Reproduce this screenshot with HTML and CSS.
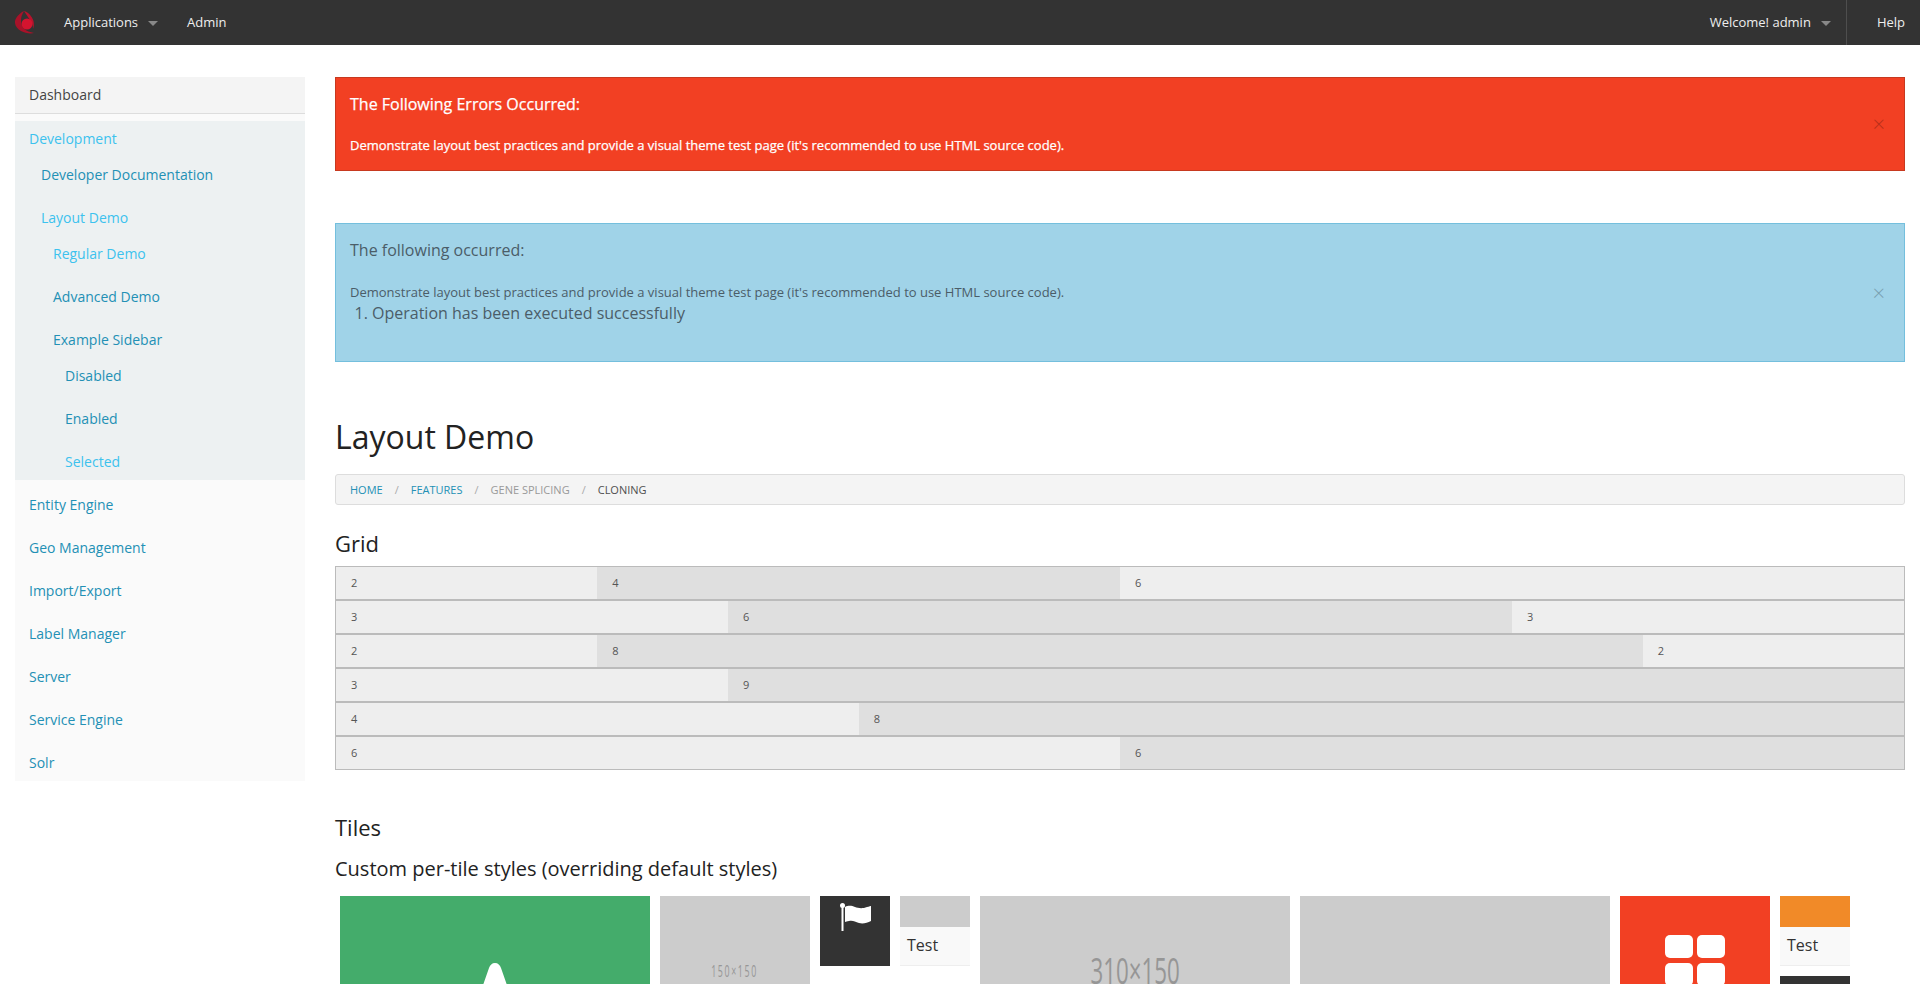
FILE: index.html
```html
<!DOCTYPE html>
<html lang="en">
<head>
    <meta charset="UTF-8">
    <meta name="viewport" content="width=device-width, initial-scale=1.0">
    <title>Layout Demo</title>
    <link rel="stylesheet" href="styles.css">
</head>
<body>
    <nav class="topbar">
        <a class="logo" href="#">
            <svg width="20" height="23" viewBox="0 0 20 23">
                <path fill="#a81229" d="M9 0C5 2 1 6 0 10c-.500 4 2 8 6 10 4 2 9 3 13 2-5-1-10-3-12-7C5 10 6 5 9 0z"/>
                <path fill="#b8132c" d="M9 0c4 1 8 5 9.500 10 .5 3 .5 6-.5 8 0-4-1-7-3-9-2-3-4-6-6-9z"/>
                <circle cx="12" cy="13" r="5.500" fill="#d4142f"/>
            </svg>
        </a>
        <a class="nav-link" href="#">Applications<span class="caret"></span></a>
        <a class="nav-link admin" href="#">Admin</a>
        <div class="nav-right">
            <a class="nav-link" href="#">Welcome! admin<span class="caret"></span></a>
            <a class="nav-link help" href="#">Help</a>
        </div>
    </nav>

    <div class="page">
        <aside class="sidebar">
            <a class="dash" href="#">Dashboard</a>
            <ul class="side-menu">
                <li class="open">
                    <a class="on" href="#">Development</a>
                    <ul class="sub">
                        <li><a href="#">Developer Documentation</a></li>
                        <li>
                            <a class="on" href="#">Layout Demo</a>
                            <ul class="sub">
                                <li><a class="on" href="#">Regular Demo</a></li>
                                <li><a href="#">Advanced Demo</a></li>
                                <li>
                                    <a href="#">Example Sidebar</a>
                                    <ul class="sub">
                                        <li><a href="#">Disabled</a></li>
                                        <li><a href="#">Enabled</a></li>
                                        <li><a class="on" href="#">Selected</a></li>
                                    </ul>
                                </li>
                            </ul>
                        </li>
                    </ul>
                </li>
                <li><a href="#">Entity Engine</a></li>
                <li><a href="#">Geo Management</a></li>
                <li><a href="#">Import/Export</a></li>
                <li><a href="#">Label Manager</a></li>
                <li><a href="#">Server</a></li>
                <li><a href="#">Service Engine</a></li>
                <li><a href="#">Solr</a></li>
            </ul>
        </aside>

        <main class="content">
            <div class="alert alert-error">
                <h4>The Following Errors Occurred:</h4>
                <p>Demonstrate layout best practices and provide a visual theme test page (it's recommended to use HTML source code).</p>
                <span class="close">&times;</span>
            </div>

            <div class="alert alert-info">
                <h4>The following occurred:</h4>
                <p>Demonstrate layout best practices and provide a visual theme test page (it's recommended to use HTML source code).</p>
                <ol>
                    <li>Operation has been executed successfully</li>
                </ol>
                <span class="close">&times;</span>
            </div>

            <h1>Layout Demo</h1>

            <ul class="breadcrumbs">
                <li><a href="#">Home</a></li>
                <li><a href="#">Features</a></li>
                <li class="unavailable">Gene Splicing</li>
                <li class="current">Cloning</li>
            </ul>

            <h2>Grid</h2>
            <div class="grid">
                <div class="grid-row">
                    <div class="col col-2">2</div>
                    <div class="col col-4">4</div>
                    <div class="col col-6">6</div>
                </div>
                <div class="grid-row">
                    <div class="col col-3">3</div>
                    <div class="col col-6">6</div>
                    <div class="col col-3">3</div>
                </div>
                <div class="grid-row">
                    <div class="col col-2">2</div>
                    <div class="col col-8">8</div>
                    <div class="col col-2">2</div>
                </div>
                <div class="grid-row">
                    <div class="col col-3">3</div>
                    <div class="col col-9">9</div>
                </div>
                <div class="grid-row">
                    <div class="col col-4">4</div>
                    <div class="col col-8">8</div>
                </div>
                <div class="grid-row">
                    <div class="col col-6">6</div>
                    <div class="col col-6">6</div>
                </div>
            </div>

            <h2 class="tiles-title">Tiles</h2>
            <h3>Custom per-tile styles (overriding default styles)</h3>

            <div class="tiles">
                <div class="tile tile-big tile-green">
                    <svg class="arrow" width="80" height="60" viewBox="0 0 80 60">
                        <path fill="#fff" d="M40 0c3 0 5 2 6 5l14 40H20L34 5c1-3 3-5 6-5z"/>
                    </svg>
                </div>
                <div class="tile tile-med placeholder"><span class="ph-small">150×150</span></div>
                <div class="tile-stack">
                    <div class="tile tile-small tile-dark">
                        <svg class="flag" width="32" height="28" viewBox="0 0 32 28">
                            <circle cx="2.500" cy="2.500" r="2.500" fill="#fff"/>
                            <rect x="1.500" y="3" width="2" height="25" fill="#fff"/>
                            <path fill="#fff" d="M5 4c4-2 7-1 10 0s7 2 12 0c2-.500 4-1 4-1v15c-4 2-8 3-12 2s-6-3-10-2c-2 0-3 1-4 1z"/>
                        </svg>
                    </div>
                </div>
                <div class="tile-stack">
                    <div class="tile tile-small tile-caption">
                        <div class="cap-img"></div>
                        <div class="cap-text">Test</div>
                    </div>
                </div>
                <div class="tile tile-big placeholder"><span class="ph-large">310×150</span></div>
                <div class="tile tile-big placeholder"></div>
                <div class="tile tile-med tile-red">
                    <svg class="apps" width="60" height="50" viewBox="0 0 60 50">
                        <rect width="28" height="23" rx="5" fill="#fff"/>
                        <rect x="32" width="28" height="23" rx="5" fill="#fff"/>
                        <rect y="28" width="28" height="23" rx="5" fill="#fff"/>
                        <rect x="32" y="28" width="28" height="23" rx="5" fill="#fff"/>
                    </svg>
                </div>
                <div class="tile-stack">
                    <div class="tile tile-small tile-caption">
                        <div class="cap-img cap-orange"></div>
                        <div class="cap-text">Test</div>
                    </div>
                    <div class="tile tile-small tile-dark"></div>
                </div>
            </div>
        </main>
    </div>
</body>
</html>
```

FILE: styles.css
```css
html {
    overflow: hidden;
}

body {
    font-family: "Open Sans", sans-serif;
    font-size: 14px;
    background-color: #fff;
    color: #222;
    margin: 0;
}

a {
    text-decoration: none;
}

ul, ol {
    list-style: none;
    margin: 0;
    padding: 0;
}

/* top bar */
.topbar {
    display: flex;
    align-items: center;
    height: 45px;
    background: #333;
    padding-left: 15px;
}

.logo {
    display: flex;
    width: 49px;
}

.nav-link {
    color: #eee;
    font-size: 13px;
    font-weight: 400;
    line-height: 45px;
    white-space: nowrap;
}

.caret {
    display: inline-block;
    margin-left: 10px;
    vertical-align: middle;
    border-style: solid;
    border-width: 5px 5px 0;
    border-color: #888 transparent transparent;
}

.admin {
    margin-left: 29px;
}

.nav-right {
    display: flex;
    margin-left: auto;
    padding-right: 15px;
}

.help {
    margin-left: 15px;
    padding-left: 30px;
    border-left: 1px solid #4e4e4e;
}

/* layout */
.page {
    display: flex;
    align-items: flex-start;
    padding: 32px 15px 0;
}

.sidebar {
    flex: 0 0 290px;
    background: #fafafa;
}

.content {
    flex: 1;
    min-width: 0;
    margin-left: 30px;
}

/* side menu */
.dash {
    display: block;
    height: 36px;
    line-height: 36px;
    padding-left: 14px;
    background: #f4f4f4;
    border-bottom: 1px solid #ddd;
    color: #444;
}

.side-menu {
    padding-top: 7px;
}

.side-menu a {
    display: block;
    height: 36px;
    line-height: 36px;
    padding-left: 14px;
    color: #2390b5;
    white-space: nowrap;
}

.side-menu > li + li {
    margin-top: 7px;
}

.side-menu a.on {
    color: #3cc2ee;
}

.open {
    background: #edf1f2;
}

.sub {
    padding-left: 12px;
}

.sub li + li {
    margin-top: 7px;
}

/* alerts */
.alert {
    position: relative;
    border: 1px solid;
    padding: 14px 14px 0;
}

.alert h4 {
    margin: 0;
    font-size: 16px;
    font-weight: 400;
    line-height: 24px;
}

.alert p {
    margin: 0;
    font-size: 13px;
    line-height: 20px;
}

.alert-error {
    height: 94px;
    box-sizing: border-box;
    background: #f24023;
    border-color: #c7391f;
    color: #fff;
}

.alert-error h4, .alert-error p {
    -webkit-text-stroke: 0.25px #fff;
}

.alert-error p {
    margin-top: 19px;
}

.alert-info {
    height: 139px;
    box-sizing: border-box;
    margin-top: 52px;
    background: #a0d3e8;
    border-color: #74bfdd;
    color: #4b5d68;
}

.alert-info p {
    margin-top: 20px;
}

.alert-info ol {
    list-style: decimal;
    margin-top: -1px;
    padding-left: 22px;
    font-size: 16px;
    line-height: 24px;
}

.close {
    position: absolute;
    right: 19px;
    top: 50%;
    margin-top: -16px;
    font-size: 22px;
    font-weight: 300;
    line-height: 30px;
    color: #000;
    opacity: 0.25;
}

/* headings */
h1 {
    margin: 53px 0 0;
    font-size: 32px;
    font-weight: 400;
    line-height: 44px;
    color: #222;
}

h2 {
    margin: 23px 0 0;
    font-size: 22px;
    font-weight: 400;
    line-height: 30px;
    color: #222;
}

h3 {
    margin: 12px 0 0;
    font-size: 20px;
    font-weight: 400;
    line-height: 30px;
    color: #222;
}

/* breadcrumbs */
.breadcrumbs {
    display: flex;
    height: 31px;
    box-sizing: border-box;
    margin-top: 15px;
    padding-left: 14px;
    background: #f4f4f4;
    border: 1px solid #ddd;
    border-radius: 3px;
    font-size: 11px;
    line-height: 29px;
    text-transform: uppercase;
}

.breadcrumbs li + li::before {
    content: "/";
    margin: 0 12px;
    color: #aaa;
}

.breadcrumbs a {
    color: #2390b5;
}

.unavailable {
    color: #999;
}

.current {
    color: #4f4f4f;
}

/* grid */
.grid {
    margin-top: 8px;
}

.grid-row {
    display: flex;
    height: 34px;
    box-sizing: border-box;
    border: 1px solid #bbb;
    background: #ddd;
}

.col {
    box-sizing: border-box;
    padding-left: 15px;
    font-size: 11px;
    line-height: 32px;
    color: #555;
    background: #eee;
}

.col:nth-child(even) {
    background: #dfdfdf;
}

.col-2 { width: 16.6667%; }
.col-3 { width: 25%; }
.col-4 { width: 33.3333%; }
.col-6 { width: 50%; }
.col-8 { width: 66.6667%; }
.col-9 { width: 75%; }

/* tiles */
.tiles-title {
    margin-top: 42px;
}

.tiles {
    display: flex;
    align-items: flex-start;
    gap: 10px;
    margin-top: 12px;
    padding-left: 5px;
}

.tile {
    flex: none;
}

.tile-big {
    width: 310px;
    height: 310px;
    text-align: center;
}

.tile-med {
    width: 150px;
    height: 150px;
    text-align: center;
}

.tile-small {
    width: 70px;
    height: 70px;
}

.tile-stack {
    display: flex;
    flex-direction: column;
    gap: 10px;
}

.tile-green {
    background: #44ac6b;
}

.arrow {
    margin-top: 67px;
}

.tile-dark {
    background: #333;
    text-align: center;
}

.flag {
    margin-top: 7px;
    margin-left: 2px;
}

.tile-red {
    background: #f24023;
}

.apps {
    margin-top: 39px;
}

.placeholder {
    display: flex;
    align-items: flex-start;
    justify-content: center;
    background: #ccc;
    color: #969696;
}

.ph-small {
    margin-top: 63px;
    font-size: 16px;
    line-height: 24px;
    letter-spacing: 3px;
    transform: scaleX(0.55);
}

.ph-large {
    margin-top: 62px;
    font-size: 36px;
    line-height: 26px;
    transform: scaleX(0.62);
}

.tile-caption {
    background: #f9f9f9;
    border-bottom: 1px solid #eee;
    height: 69px;
}

.cap-img {
    height: 31px;
    background: #ccc;
}

.cap-orange {
    background: #f18a28;
}

.cap-text {
    padding-left: 7px;
    font-size: 16px;
    line-height: 37px;
    color: #333;
}
```
